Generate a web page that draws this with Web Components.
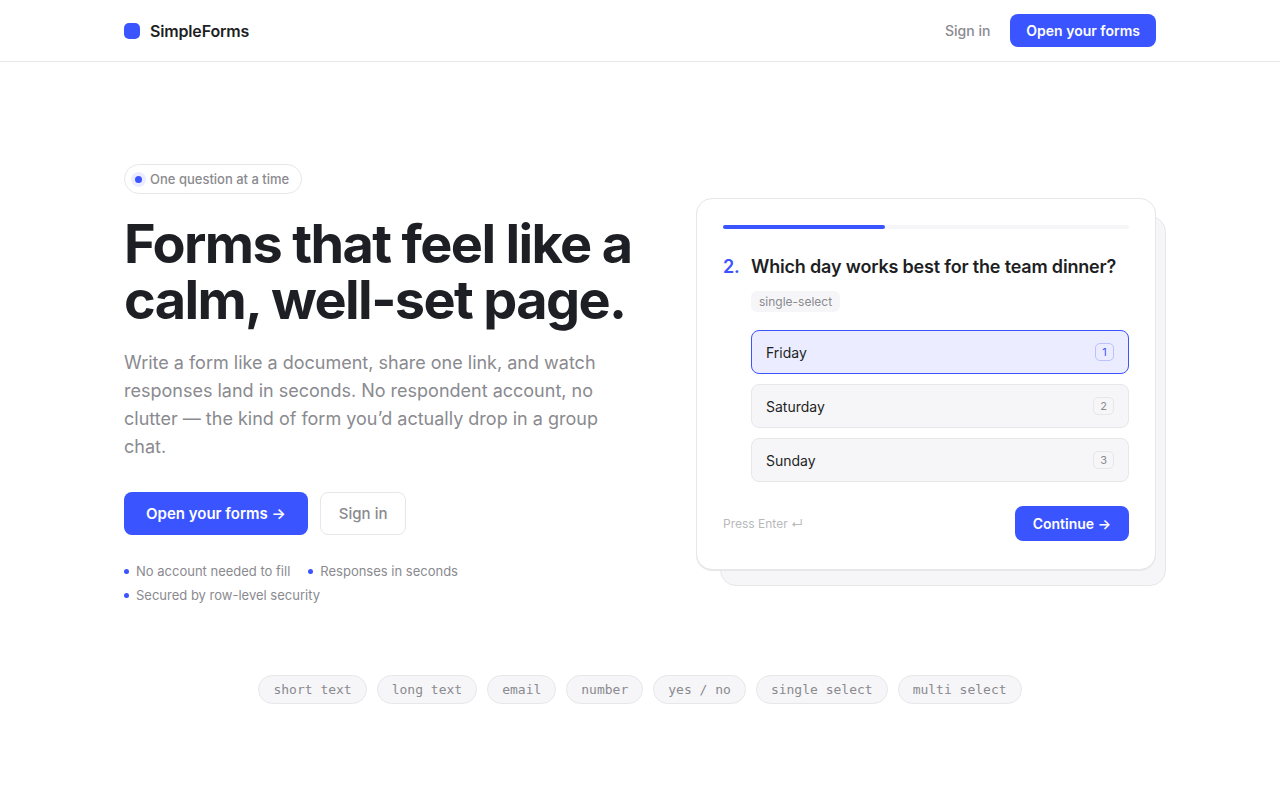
<!DOCTYPE html>
<html lang="en">
<head>
<meta charset="utf-8">
<meta name="viewport" content="width=device-width, initial-scale=1">
<title>SimpleForms</title>
<style>
  :root {
    --accent: #3a54ff;
    --accent-soft: #ebecff;
    --ink: #1e1f24;
    --muted: #8a8a8f;
    --faint: #b8b9bd;
    --line: #e7e7ea;
    --surface: #f6f6f9;
    --mono: "DejaVu Sans Mono", monospace;
  }
  body {
    margin: 0;
    background: #fff;
    color: var(--ink);
    font: 400 14px/20px Inter, sans-serif;
    -webkit-font-smoothing: antialiased;
  }
</style>
</head>
<body>
<sf-header></sf-header>
<sf-hero>
  <sf-question-card slot="preview"></sf-question-card>
</sf-hero>
<sf-type-list></sf-type-list>

<script>
  function define(name, html, setup) {
    const template = document.createElement("template");
    template.innerHTML = "<style>*{box-sizing:border-box}</style>" + html;
    customElements.define(name, class extends HTMLElement {
      constructor() {
        super();
        this.attachShadow({ mode: "open" }).append(template.content.cloneNode(true));
      }
      connectedCallback() {
        if (setup) setup(this, this.shadowRoot);
      }
    });
  }

  // Link styled as a button: size="large", variant="ghost" (large only)
  define("sf-link-button", `
    <style>
      :host { display: inline-flex; }
      a {
        display: block;
        padding: 7px 16px 6px;
        border-radius: 8px;
        background: var(--accent);
        color: #fff;
        font-weight: 600;
        text-decoration: none;
        white-space: nowrap;
      }
      :host([size="large"]) a { padding: 12px 22px 11px; font-size: 15px; }
      :host([size="large"][variant="ghost"]) a {
        padding: 11px 18px 10px;
        border: 1px solid var(--line);
        background: #fff;
        color: var(--muted);
        font-weight: 500;
      }
    </style>
    <a><slot></slot></a>
  `, (host, root) => { root.querySelector("a").href = host.getAttribute("href") || "#"; });

  define("sf-header", `
    <style>
      :host { display: block; border-bottom: 1px solid var(--line); }
      header {
        display: flex; align-items: center; justify-content: space-between;
        max-width: 1080px; margin: 0 auto; padding: 14px 24px;
      }
      a { text-decoration: none; }
      .brand { display: flex; align-items: center; gap: 10px; color: var(--ink); font-size: 16px; font-weight: 600; letter-spacing: -0.01em; }
      .mark { width: 16px; height: 16px; border-radius: 5px; background: var(--accent); }
      nav { display: flex; align-items: center; gap: 20px; }
      .sign { color: var(--muted); font-weight: 500; }
    </style>
    <header>
      <a class="brand" href="#"><span class="mark"></span>SimpleForms</a>
      <nav>
        <a class="sign" href="#sign-in">Sign in</a>
        <sf-link-button href="#forms">Open your forms</sf-link-button>
      </nav>
    </header>
  `);

  define("sf-badge", `
    <style>
      :host {
        display: inline-flex; align-items: center; gap: 8px;
        padding: 4px 12px 4px 10px;
        border: 1px solid var(--line); border-radius: 15px;
        color: var(--muted); font-size: 13px; font-weight: 500;
      }
      i { width: 7px; height: 7px; border-radius: 50%; background: var(--accent); box-shadow: 0 0 0 4px var(--accent-soft); }
    </style>
    <i></i><slot></slot>
  `);

  define("sf-hero", `
    <style>
      :host { display: block; }
      section {
        display: grid; grid-template-columns: minmax(0, 1fr) minmax(0, 460px);
        align-items: center; gap: 56px;
        max-width: 1080px; margin: 0 auto; padding: 102px 24px 71px;
      }
      .copy { display: flex; flex-direction: column; align-items: flex-start; }
      h1 { margin: 22px 0 0; font-size: 54px; line-height: 56px; font-weight: 700; letter-spacing: -0.03em; }
      p { margin: 21px 0 0; color: var(--muted); font-size: 18px; line-height: 28px; }
      .actions { display: flex; flex-wrap: wrap; gap: 12px; margin-top: 31px; }
      ul {
        display: flex; flex-wrap: wrap; gap: 6px 18px;
        margin: 27px 0 0; padding: 0; list-style: none;
        color: var(--muted); font-size: 13px; line-height: 18px;
      }
      li { display: flex; align-items: center; gap: 7px; }
      li::before { content: ""; width: 5px; height: 5px; border-radius: 50%; background: var(--accent); }
      @media (max-width: 900px) { section { grid-template-columns: minmax(0, 1fr); } }
    </style>
    <section>
      <div class="copy">
        <sf-badge>One question at a time</sf-badge>
        <h1>Forms that feel like a calm, well-set page.</h1>
        <p>Write a form like a document, share one link, and watch responses land in seconds. No respondent account, no clutter — the kind of form you’d actually drop in a group chat.</p>
        <div class="actions">
          <sf-link-button size="large" href="#forms">Open your forms →</sf-link-button>
          <sf-link-button size="large" variant="ghost" href="#sign-in">Sign in</sf-link-button>
        </div>
        <ul>
          <li>No account needed to fill</li>
          <li>Responses in seconds</li>
          <li>Secured by row-level security</li>
        </ul>
      </div>
      <slot name="preview"></slot>
    </section>
  `);

  define("sf-question-card", `
    <style>
      :host { display: block; position: relative; z-index: 0; }
      /* second sheet peeking out behind the card */
      :host::before {
        content: ""; position: absolute; z-index: -1;
        inset: 18px -10px -16px 24px;
        border: 1px solid var(--line); border-radius: 16px; background: var(--surface);
      }
      form {
        padding: 26px 26px 28px;
        border: 1px solid var(--line); border-radius: 16px;
        background: #fff; box-shadow: 0 1px 0 var(--line);
      }
      .track { height: 4px; border-radius: 2px; background: var(--surface); }
      .track span { display: block; width: 40%; height: 100%; border-radius: 2px; background: var(--accent); }
      fieldset { display: grid; grid-template-columns: 28px minmax(0, 1fr); margin: 26px 0 0; padding: 0; border: 0; }
      .num, h2 { margin: 0; font-size: 18px; line-height: 24px; font-weight: 600; letter-spacing: -0.01em; }
      .num { color: var(--accent); }
      .body { grid-column: 2; }
      .tag {
        display: inline-block; margin-top: 12px; padding: 1px 8px 0;
        border-radius: 6px; background: var(--surface); color: var(--muted); font-size: 12px; vertical-align: top;
      }
      .options { display: grid; gap: 10px; margin-top: 18px; }
      label {
        position: relative; display: flex; align-items: center; justify-content: space-between;
        height: 44px; padding: 0 14px;
        border: 1px solid var(--line); border-radius: 8px; background: var(--surface);
      }
      input { position: absolute; inset: 0; margin: 0; opacity: 0; }
      label span { padding-top: 2px; }
      kbd {
        min-width: 19px; padding: 0 6px; border: 1px solid var(--line); border-radius: 5px;
        color: var(--muted); font: 400 11px/16px Inter, sans-serif; text-align: center;
      }
      label:has(:checked) { border-color: var(--accent); background: var(--accent-soft); }
      label:has(:checked) kbd { border-color: #bcc2fd; color: var(--accent); }
      footer { display: flex; align-items: center; justify-content: space-between; margin-top: 24px; }
      .hint { color: var(--faint); font-size: 12px; }
      button {
        padding: 8px 18px 7px; border: 0; border-radius: 8px;
        background: var(--accent); color: #fff; font: inherit; font-weight: 600;
      }
    </style>
    <form onsubmit="return false">
      <div class="track"><span></span></div>
      <fieldset aria-labelledby="question">
        <span class="num">2.</span>
        <h2 id="question">Which day works best for the team dinner?</h2>
        <div class="body">
          <span class="tag">single-select</span>
          <div class="options">
            <label><input type="radio" name="day" checked><span>Friday</span><kbd>1</kbd></label>
            <label><input type="radio" name="day"><span>Saturday</span><kbd>2</kbd></label>
            <label><input type="radio" name="day"><span>Sunday</span><kbd>3</kbd></label>
          </div>
        </div>
      </fieldset>
      <footer>
        <span class="hint">Press Enter ↵</span>
        <button type="submit">Continue →</button>
      </footer>
    </form>
  `);

  define("sf-type-list", `
    <style>
      :host { display: block; max-width: 1080px; margin: 0 auto; padding: 0 24px 96px; box-sizing: border-box; }
      ul { display: flex; flex-wrap: wrap; justify-content: center; gap: 10px; margin: 0; padding: 0; list-style: none; }
      li {
        padding: 5px 14px 4px;
        border: 1px solid var(--line); border-radius: 15px; background: var(--surface);
        color: var(--muted); font: 400 13px/18px var(--mono);
      }
    </style>
    <ul>
      <li>short text</li><li>long text</li><li>email</li><li>number</li>
      <li>yes / no</li><li>single select</li><li>multi select</li>
    </ul>
  `);
</script>
</body>
</html>
